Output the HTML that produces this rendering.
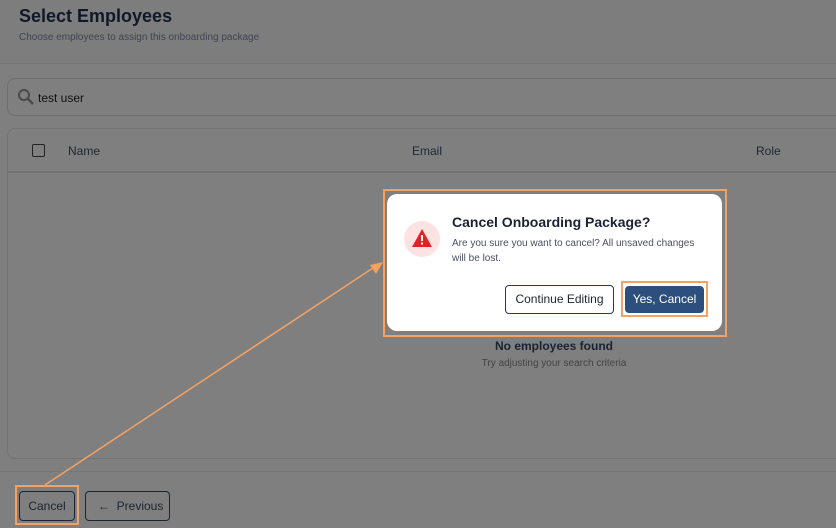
<!DOCTYPE html>
<html><head><style>
*{margin:0;padding:0;box-sizing:border-box}
body{width:836px;height:528px;overflow:hidden;background:#7f7f7f;font-family:"Liberation Sans",sans-serif;position:relative}
.a{position:absolute}
</style></head><body>
<div class="a" style="left:0;top:0;width:836px;height:64px;background:#7d7d7d;border-bottom:1px solid #777"></div>
<div class="a" style="left:19px;top:6px;font-size:18px;font-weight:bold;color:#101828">Select Employees</div>
<div class="a" style="left:19px;top:32px;font-size:10px;color:#3e4450">Choose employees to assign this onboarding package</div>
<div class="a" style="left:7px;top:78px;width:840px;height:38px;border:1px solid #6f6f6f;border-radius:8px"></div>
<svg class="a" style="left:17px;top:88px" width="18" height="18" viewBox="0 0 18 18"><circle cx="7" cy="7" r="5" fill="none" stroke="#4a4a4a" stroke-width="2"/><path d="M11 11l5 5" stroke="#4a4a4a" stroke-width="2.4"/></svg>
<div class="a" style="left:38px;top:91px;font-size:12px;color:#111">test user</div>
<div class="a" style="left:7px;top:128px;width:840px;height:331px;border:1px solid #747474;border-radius:8px"></div>
<div class="a" style="left:8px;top:171px;width:828px;height:2px;background:#747474"></div>
<div class="a" style="left:32px;top:144px;width:13px;height:13px;border:1.5px solid #222;border-radius:2px"></div>
<div class="a" style="left:68px;top:144px;font-size:12px;color:#1f2533">Name</div>
<div class="a" style="left:412px;top:144px;font-size:12px;color:#1f2533">Email</div>
<div class="a" style="left:756px;top:144px;font-size:12px;color:#1f2533">Role</div>
<div class="a" style="left:454px;top:339px;width:200px;text-align:center;font-size:12px;font-weight:bold;color:#1b2230">No employees found</div>
<div class="a" style="left:454px;top:358px;width:200px;text-align:center;font-size:10px;color:#444">Try adjusting your search criteria</div>
<div class="a" style="left:0;top:471px;width:836px;height:1px;background:#777"></div>
<div class="a" style="left:15px;top:485px;width:64px;height:40px;border:2px solid #f4a261"></div>
<div class="a" style="left:19px;top:491px;width:56px;height:30px;border:1px solid #1d2330;border-radius:4px;font-size:12px;color:#1d2330;text-align:center;line-height:29px">Cancel</div>
<div class="a" style="left:85px;top:491px;width:85px;height:30px;border:1px solid #1d2330;border-radius:4px;font-size:12px;color:#1d2330;line-height:29px;padding-left:12px">&#8592;&nbsp;&nbsp;Previous</div>
<svg class="a" style="left:0;top:0" width="836" height="528"><path d="M45 485L379 264" stroke="#f4a261" stroke-width="1.5"/><path d="M383 262L370 265L376 274Z" fill="#f4a261"/></svg>
<div class="a" style="left:383px;top:189px;width:344px;height:148px;border:2px solid #f4a261"></div>
<div class="a" style="left:387px;top:194px;width:335px;height:137px;background:#fff;border-radius:10px"></div>
<div class="a" style="left:404px;top:221px;width:36px;height:36px;border-radius:50%;background:#fde2e2"></div>
<svg class="a" style="left:411px;top:228px" width="22" height="20" viewBox="0 0 22 20"><path d="M11 1L21 19H1Z" fill="#dc2626"/><rect x="10" y="7" width="2" height="6" fill="#fff"/><rect x="10" y="14.5" width="2" height="2" fill="#fff"/></svg>
<div class="a" style="left:452px;top:214px;font-size:14px;font-weight:bold;color:#1b2233">Cancel Onboarding Package?</div>
<div class="a" style="left:452px;top:236px;width:255px;font-size:10px;line-height:15px;color:#4b5060">Are you sure you want to cancel? All unsaved changes will be lost.</div>
<div class="a" style="left:505px;top:285px;width:109px;height:29px;border:1px solid #1e3a5f;border-radius:4px;font-size:12px;color:#1d2330;text-align:center;line-height:27px">Continue Editing</div>
<div class="a" style="left:621px;top:281px;width:87px;height:36px;border:2px solid #f4a261"></div>
<div class="a" style="left:625px;top:286px;width:79px;height:27px;background:#2c4f7e;border-radius:4px;font-size:12px;color:#fff;text-align:center;line-height:27px">Yes, Cancel</div>
</body></html>
